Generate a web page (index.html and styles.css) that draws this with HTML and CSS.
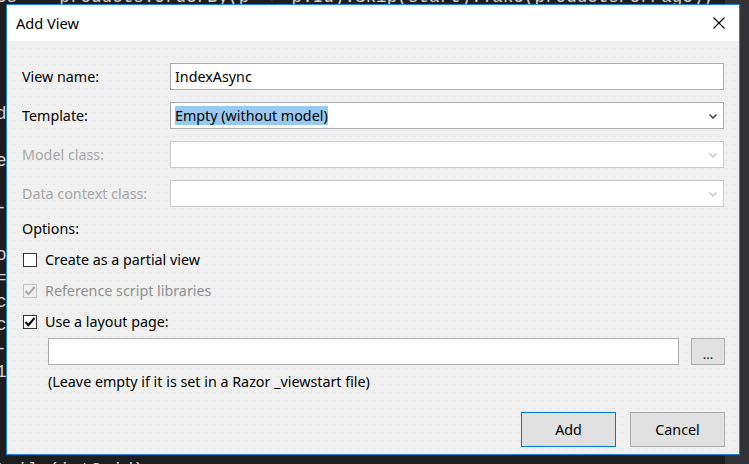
FILE: index.html
```html
<!DOCTYPE html>
<html lang="en">
<head>
<meta charset="utf-8">
<title>Add View</title>
<link rel="stylesheet" href="styles.css">
</head>
<body>
<div class="editor">
  <div class="code">
    <div class="ln">es  = products.OrderBy(p =&gt; p.Id).Skip(start).Take(productsPerPage);</div>
    <div class="ln"></div>
    <div class="ln"></div>
    <div class="ln"></div>
    <div class="ln"></div>
    <div class="ln"><span>d</span></div>
    <div class="ln"></div>
    <div class="ln"><span>e</span></div>
    <div class="ln"></div>
    <div class="ln"><span>-</span></div>
    <div class="ln"></div>
    <div class="ln"><span>o</span></div>
    <div class="ln"><span>=</span></div>
    <div class="ln"><span>c</span></div>
    <div class="ln"><span>c</span></div>
    <div class="ln"><span>-</span></div>
    <div class="ln"><span>1</span></div>
    <div class="ln"></div>
    <div class="ln"></div>
    <div class="ln"></div>
    <div class="ln last">tail (int? id)</div>
  </div>
  <div class="scrollbar"></div>
</div>

<div class="dialog">
  <div class="titlebar">
    <span class="title">Add View</span>
    <svg class="close" width="12" height="12" viewBox="0 0 12 12"><path d="M0.5 0.5L11.5 11.5M11.5 0.5L0.5 11.5" stroke="#000" stroke-width="1.1" fill="none"/></svg>
  </div>
  <div class="body">
    <div class="form">
      <span class="label">View name:</span>
      <div class="field"><span>IndexAsync</span></div>
      <span class="label">Template:</span>
      <div class="field combo"><span class="sel">Empty (without model)</span>
        <svg class="chev" width="8" height="5" viewBox="0 0 8 5"><path d="M0.5 0.5L4 4L7.5 0.5" stroke="#333" stroke-width="1.3" fill="none"/></svg></div>
      <span class="label disabled">Model class:</span>
      <div class="field combo disabled"><span></span>
        <svg class="chev" width="8" height="5" viewBox="0 0 8 5"><path d="M0.5 0.5L4 4L7.5 0.5" stroke="#bdbdbd" stroke-width="1.2" fill="none"/></svg></div>
      <span class="label disabled">Data context class:</span>
      <div class="field combo disabled"><span></span>
        <svg class="chev" width="8" height="5" viewBox="0 0 8 5"><path d="M0.5 0.5L4 4L7.5 0.5" stroke="#bdbdbd" stroke-width="1.2" fill="none"/></svg></div>
    </div>

    <div class="options">Options:</div>
    <div class="checks">
      <div class="check"><span class="box"></span><span>Create as a partial view</span></div>
      <div class="check disabled"><span class="box"><svg width="12" height="12" viewBox="0 0 12 12"><path d="M1.5 6L4.4 9.2L10.5 2" stroke="#a8a8a8" stroke-width="2" fill="none"/></svg></span><span>Reference script libraries</span></div>
      <div class="check"><span class="box"><svg width="12" height="12" viewBox="0 0 12 12"><path d="M1.5 6L4.4 9.2L10.5 2" stroke="#000" stroke-width="2" fill="none"/></svg></span><span>Use a layout page:</span></div>
    </div>

    <div class="layout-row">
      <div class="field grow"></div>
      <button class="btn small">...</button>
    </div>
    <div class="hint">(Leave empty if it is set in a Razor _viewstart file)</div>

    <div class="actions">
      <button class="btn default">Add</button>
      <button class="btn">Cancel</button>
    </div>
  </div>
</div>
</body>
</html>
```

FILE: styles.css
```css
html, body {
  margin: 0;
  padding: 0;
}

body {
  width: 749px;
  height: 464px;
  overflow: hidden;
  position: relative;
  background: #1e1e1e;
  font-family: "Noto Sans", "DejaVu Sans", sans-serif;
}

.editor {
  display: flex;
  height: 100%;
  overflow: hidden;
}

.code {
  flex: 1;
  margin: -14px 0 0 -4px;
  font-family: "Liberation Mono", monospace;
  font-size: 17.6px;
  color: #d4d4d4;
  overflow: hidden;
}

.ln {
  height: 23.45px;
  line-height: 23.45px;
  white-space: pre;
}

.ln.last {
  margin-top: 4px;
}

.scrollbar {
  width: 24px;
  flex: none;
  background: #333337;
}

.dialog {
  position: absolute;
  left: 6px;
  top: 4px;
  width: 732px;
  height: 449px;
  border: 1px solid #1883d7;
  background: #f0f0f0;
  display: flex;
  flex-direction: column;
  font-size: 14.3px;
  color: #000;
}

.titlebar {
  height: 36px;
  flex: none;
  background: #fff;
  display: flex;
  align-items: center;
  justify-content: space-between;
  padding: 0 14px 0 9px;
}

.title {
  font-size: 14.6px;
  line-height: 20px;
}

.body {
  flex: 1;
  display: flex;
  flex-direction: column;
  padding: 22px 14px 7px 15px;
  background:
    linear-gradient(90deg, #f0f0f0 7px, transparent 7px) 0 0 / 8px 8px,
    linear-gradient(#f0f0f0 7px, transparent 7px) 0 0 / 8px 8px,
    #dadada;
}

.form {
  display: grid;
  grid-template-columns: 148px 1fr;
  grid-auto-rows: 27px;
  row-gap: 12px;
  align-items: center;
  margin-right: 1px;
}

.label {
  line-height: 20px;
}

.label.disabled {
  color: #a6a6a6;
}

.field {
  box-sizing: border-box;
  height: 27px;
  border: 1px solid #abadb3;
  background: #fff;
  display: flex;
  align-items: center;
  padding-left: 4px;
  line-height: 19px;
}

.field.disabled {
  border-color: #cccccc;
}

.combo {
  justify-content: space-between;
  padding-right: 6px;
}

.chev {
  margin-top: 1px;
}

.sel {
  background: #99c9ef;
  line-height: 19px;
}

.options {
  margin-top: 12px;
  line-height: 20px;
}

.checks {
  margin-top: 11px;
  display: flex;
  flex-direction: column;
  gap: 11px;
}

.check {
  display: flex;
  align-items: center;
  gap: 8px;
  height: 20px;
  padding-left: 1px;
  line-height: 20px;
}

.box {
  box-sizing: border-box;
  width: 14px;
  height: 14px;
  border: 1px solid #333;
  background: #fff;
  display: flex;
  align-items: center;
  justify-content: center;
}

.check.disabled {
  color: #8f8f8f;
}

.check.disabled .box {
  border-color: #c4c4c4;
  background: #efefef;
}

.layout-row {
  display: flex;
  gap: 12px;
  margin: 6px 0 0 26px;
  height: 27px;
}

.grow {
  flex: 1;
}

.btn {
  box-sizing: border-box;
  width: 95px;
  height: 35px;
  border: 1px solid #adadad;
  background: #e1e1e1;
  font-family: inherit;
  font-size: 14.3px;
  color: #000;
  padding: 0;
}

.btn.small {
  width: 34px;
  height: 27px;
  font-size: 13px;
  line-height: 14px;
  padding-top: 4px;
}

.btn.default {
  border-color: #0078d7;
}

.hint {
  margin: 7px 0 0 26px;
  line-height: 20px;
}

.actions {
  margin-top: auto;
  display: flex;
  justify-content: flex-end;
  gap: 14px;
}
```
